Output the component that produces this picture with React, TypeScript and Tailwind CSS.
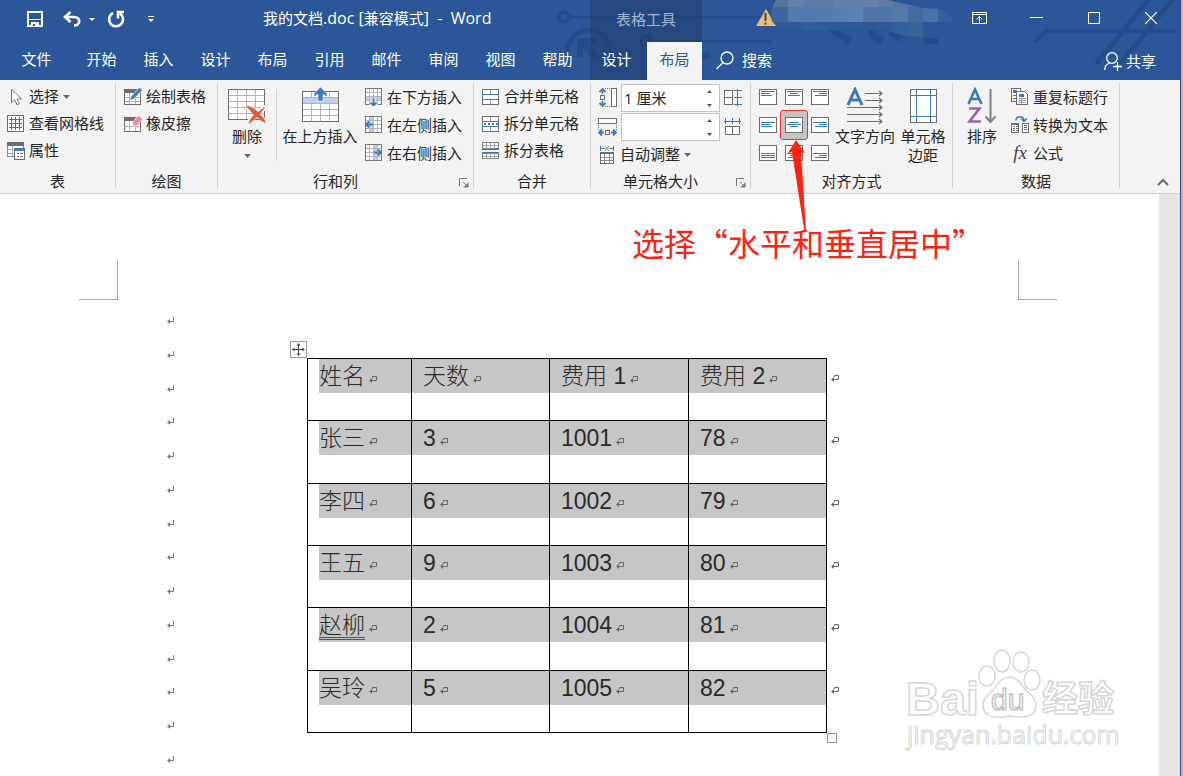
import React from 'react';

type Align = 'start' | 'center' | 'end';

const TABS = ['开始', '插入', '设计', '布局', '引用', '邮件', '审阅', '视图', '帮助'];

const HEADERS = ['姓名', '天数', '费用 1', '费用 2'];

const ROWS = [
  ['张三', '3', '1001', '78'],
  ['李四', '6', '1002', '79'],
  ['王五', '9', '1003', '80'],
  ['赵柳', '2', '1004', '81'],
  ['吴玲', '5', '1005', '82'],
];

const GREY = '#6d6d6d';
const BLUE = '#3f7ab8';

/* ---------- small glyphs ---------- */

const Caret = () => (
  <svg width="7" height="4" viewBox="0 0 7 4" className="shrink-0">
    <path d="M0 0h7L3.5 4z" fill="#6a6a6a" />
  </svg>
);

const CellMark = () => (
  <svg width="8" height="9" viewBox="0 0 8 9" className="shrink-0" fill="none" stroke="#666">
    <path d="M3.5 3V1.5H7.5V5.5H2" />
    <path d="M0 5.5L3 3v5z" fill="#666" stroke="none" />
  </svg>
);

const ParagraphMark = () => (
  <svg width="8" height="9" viewBox="0 0 8 9" fill="none" stroke="#777">
    <path d="M6.5 1v4.5H2" />
    <path d="M0 5.5L3 3v5z" fill="#777" stroke="none" />
  </svg>
);

const Launcher = () => (
  <svg width="10" height="10" viewBox="0 0 10 10" fill="none" stroke="#777">
    <path d="M.5 8V.5H8" shapeRendering="crispEdges" />
    <path d="M4 4l4 4M9 4.5V9H4.5" />
    <path d="M9 5v4H5z" fill="#777" stroke="none" />
  </svg>
);

/* ---------- ribbon icons ---------- */

const Icon = ({ children }: { children: React.ReactNode }) => (
  <svg width="18" height="18" viewBox="0 0 18 18" fill="none" className="shrink-0">
    {children}
  </svg>
);

const CursorIcon = () => (
  <Icon>
    <path d="M4.5 1v14l3.3-3.2 2.2 5 2.3-1-2.2-4.8h4.4z" fill="#fff" stroke="#777" />
  </Icon>
);

const GridlinesIcon = () => (
  <Icon>
    <g shapeRendering="crispEdges">
      <path d="M.5 .5h16v16H.5z" fill="#fff" stroke={GREY} />
      <path d="M4.5 2v13M8.5 2v13M12.5 2v13M2 4.5h13M2 8.5h13M2 12.5h13" stroke="#2f78c4" />
    </g>
  </Icon>
);

const PropertiesIcon = () => (
  <Icon>
    <g shapeRendering="crispEdges">
      <path d="M.5 .5h16v14H.5z" fill="#fff" stroke="#8a8a8a" />
      <path d="M0 0h17v4H0z" fill={GREY} />
      <path d="M1 7.5h6M1 11.5h6M5.5 4v10" stroke="#aaa" />
      <path d="M7.5 6.5h10v11h-10z" fill="#fff" stroke={GREY} />
      <path d="M7 6h11v3H7z" fill={BLUE} />
      <path d="M10 11.5h2M13 11.5h3M10 14.5h2M13 14.5h3" stroke={GREY} />
    </g>
  </Icon>
);

const DrawTableIcon = () => (
  <Icon>
    <g shapeRendering="crispEdges">
      <path d="M.5 1.5h16v15H.5z" fill="#fff" stroke={GREY} />
      <path d="M0 1h13v4H0z" fill={GREY} />
      <path d="M1 9.5h15M1 13.5h15M5.5 5v11M11.5 5v11" stroke="#b0b0b0" />
    </g>
    <path d="M6 12.5l1-4L15.5-.5l3 2.5L10 11z" fill={BLUE} stroke="#f3f3f3" strokeWidth=".7" />
  </Icon>
);

const EraserIcon = () => (
  <Icon>
    <g shapeRendering="crispEdges">
      <path d="M.5 2.5h16v14H.5z" fill="#fff" stroke={GREY} />
      <path d="M0 2h11v4H0z" fill={GREY} />
      <path d="M1 11.5h15M5.5 6v10M11.5 9v7" stroke="#b0b0b0" />
    </g>
    <path d="M8 7.5L14.5 .5l4.5 3.5-6.5 7h-2.5z" fill="#e58c9f" stroke="#f3f3f3" strokeWidth=".7" />
  </Icon>
);

type Side = 'below' | 'left' | 'right';

const InsertIcon = ({ side }: { side: Side }) => (
  <Icon>
    <g shapeRendering="crispEdges">
      <path d="M.5 .5h16v16H.5z" fill="#fff" />
      {side === 'below' && <path d="M1 9h15v4H1z" fill="#bdd2e8" />}
      {side === 'left' && <path d="M5 1h4v15H5z" fill="#bdd2e8" />}
      {side === 'right' && <path d="M9 1h4v15H9z" fill="#bdd2e8" />}
      <path d="M1 4.5h15M1 8.5h15M1 12.5h15M4.5 1v15M8.5 1v15M12.5 1v15" stroke="#b4b4b4" />
      <path d="M.5 .5h16v16H.5z" stroke="#777" />
    </g>
    {side === 'below' && <path d="M8.5 11v7M5.5 14.5l3 3 3-3" stroke="#f3f3f3" strokeWidth="4" />}
    {side === 'below' && <path d="M8.5 11v6M5.5 14.5l3 3 3-3" stroke={BLUE} strokeWidth="1.8" />}
    {side === 'left' && <path d="M8 8.5H1M4 5.5l-3 3 3 3" stroke={BLUE} strokeWidth="1.8" />}
    {side === 'right' && <path d="M9 8.5h7M13 5.5l3 3-3 3" stroke={BLUE} strokeWidth="1.8" />}
  </Icon>
);

const MergeIcon = () => (
  <Icon>
    <g shapeRendering="crispEdges">
      <path d="M.5 1.5h16v15H.5z" fill="#fff" stroke={GREY} />
      <path d="M8.5 2v4M8.5 12v4" stroke="#a0a0a0" />
      <path d="M0 6.5h17M0 11.5h17" stroke={BLUE} />
    </g>
  </Icon>
);

const SplitCellsIcon = () => (
  <Icon>
    <g shapeRendering="crispEdges">
      <path d="M.5 1.5h16v15H.5z" fill="#fff" stroke={GREY} />
      <path d="M8.5 2v4M8.5 12v4" stroke="#a0a0a0" />
      <path d="M0 6.5h17M0 11.5h17" stroke={BLUE} />
      <path d="M2 9h2M6 9h2M10 9h2M14 9h2" stroke={BLUE} strokeWidth="2" />
    </g>
  </Icon>
);

const SplitTableIcon = () => (
  <Icon>
    <g shapeRendering="crispEdges">
      <path d="M.5 .5h16v6H.5zM.5 11.5h16v5H.5z" fill="#fff" stroke="#808080" />
      <path d="M4.5 1v5M8.5 1v5M12.5 1v5M4.5 12v4M8.5 12v4M12.5 12v4M1 3.5h15M1 14.5h15" stroke="#a4a4a4" />
      <path d="M0 7.5h17M0 10.5h17" stroke={BLUE} />
      <path d="M0 8h17v2H0z" fill="#fff" />
    </g>
  </Icon>
);

const RepeatHeaderIcon = () => (
  <Icon>
    <g shapeRendering="crispEdges">
      <path d="M.5 .5h9v13H.5z" fill="#fff" stroke={GREY} />
      <path d="M2 2h4v3H2z" fill={BLUE} />
      <path d="M2 7.5h3M2 10.5h3" stroke={GREY} />
      <path d="M5.5 3.5h8l3 3v10h-11z" fill="#fff" stroke={GREY} />
      <path d="M8 6h5v3H8z" fill={BLUE} />
      <path d="M8 10.5h7M8 12.5h7M8 14.5h7M10.5 10v6" stroke="#999" />
    </g>
  </Icon>
);

const ConvertIcon = () => (
  <Icon>
    <path d="M5 4.5C5-.5 13-.5 13 4.5" stroke={BLUE} strokeWidth="1.5" />
    <path d="M10 2.5l3 3 3-3" stroke={BLUE} strokeWidth="1.5" />
    <g shapeRendering="crispEdges">
      <path d="M.5 7.5h7v9h-7zM11.5 7.5h6v9h-6z" fill="#fff" stroke={GREY} />
      <path d="M0 7h8v2H0z" fill={GREY} />
      <path d="M2 10.5h2M5 10.5h2M2 12.5h2M5 12.5h2M2 14.5h2M5 14.5h2" stroke={GREY} />
      <path d="M13 9.5h3M13 11.5h3M13 13.5h3" stroke={BLUE} />
    </g>
  </Icon>
);

const FormulaIcon = () => (
  <span className="w-[18px] shrink-0 text-center font-['Liberation_Serif',serif] text-[19px] leading-5 text-[#444] italic">fx</span>
);

const RowHeightIcon = () => (
  <svg width="20" height="20" viewBox="0 0 20 20" fill="none" className="shrink-0">
    <g shapeRendering="crispEdges">
      <path d="M13.5 .5h5v18h-5z" fill="#fff" stroke={GREY} />
      <path d="M7 .5h6M7 18.5h6" stroke={GREY} strokeDasharray="1 1" />
      <path d="M2.5 7.5h4v4h-4z" stroke={GREY} />
    </g>
    <path d="M4.5 6V1.5M4.5 13v4.5M1.5 4l3-3 3 3M1.5 15l3 3 3-3" stroke={BLUE} strokeWidth="1.8" />
  </svg>
);

const ColumnWidthIcon = () => (
  <svg width="20" height="20" viewBox="0 0 20 20" fill="none" className="shrink-0">
    <g shapeRendering="crispEdges">
      <path d="M.5 1.5h18v5H.5z" fill="#fff" stroke={GREY} />
      <path d="M.5 8v5M18.5 8v5" stroke={GREY} strokeDasharray="1 1" />
      <path d="M7.5 13.5h4v4h-4z" stroke={GREY} />
    </g>
    <path d="M6 15.5H1M13 15.5h5M4 12.5l-3 3 3 3M15 12.5l3 3-3 3" stroke={BLUE} strokeWidth="1.8" />
  </svg>
);

const DistributeRowsIcon = () => (
  <Icon>
    <g shapeRendering="crispEdges">
      <path d="M.5 1.5h8v14h-8zM0 8.5h9" stroke={GREY} fill="#fff" />
      <path d="M10 1.5h8M10 8.5h8M10 15.5h8M13.5 0v17" stroke={BLUE} />
    </g>
  </Icon>
);

const DistributeColumnsIcon = () => (
  <Icon>
    <g shapeRendering="crispEdges">
      <path d="M1.5 8.5h14v8h-14zM8.5 8v8" stroke={GREY} fill="#fff" />
      <path d="M0 3.5h17M1.5 0v6M8.5 0v6M15.5 0v6" stroke={BLUE} />
    </g>
  </Icon>
);

const AutoFitIcon = () => (
  <Icon>
    <g shapeRendering="crispEdges">
      <path d="M2.5 0v5M15.5 0v5M3 2.5h4M11 2.5h4" stroke={BLUE} />
      <path d="M2.5 6.5h13v11h-13z" fill="#fff" stroke={GREY} />
      <path d="M2 7.5h14" stroke={GREY} />
      <path d="M6.5 8v9M11.5 8v9M3 11.5h12M3 14.5h12" stroke="#8a8a8a" />
    </g>
    <path d="M7 0l4 5M11 0L7 5" stroke="#888" />
  </Icon>
);

const LINE_TOP: Record<Align, number> = { start: 2.5, center: 5.5, end: 8.5 };

const AlignIcon = ({ v, h }: { v: Align; h: Align }) => {
  let widths = [14, 8, 12];
  if (h === 'start') widths = v === 'end' ? [14, 14, 14] : [14, 9, 11];
  if (v === 'center' && h === 'center') widths = [10, 14, 8];
  return (
    <svg width="18" height="16" viewBox="0 0 18 16" fill="none" shapeRendering="crispEdges">
      <path d="M.5 .5h17v15H.5z" fill="#fff" stroke={GREY} />
      {widths.map((w, i) => {
        const x = h === 'start' ? 2 : h === 'center' ? 9 - w / 2 : 16 - w;
        return <path key={i} d={`M${x} ${LINE_TOP[v] + i * 2}h${w}`} stroke="#2f78c4" />;
      })}
    </svg>
  );
};

const DeleteTableIcon = () => (
  <svg width="40" height="38" viewBox="0 0 40 38" fill="none">
    <g shapeRendering="crispEdges">
      <path d="M1.5 2.5h36v30h-36z" fill="#fff" stroke={GREY} />
      <path d="M10.5 3v29M19.5 3v29M28.5 3v29M2 8.5h35M2 14.5h35M2 20.5h35M2 26.5h35" stroke="#b4b4b4" />
    </g>
    <path d="M20 20c8 3 13 9 19 16M39 20c-8 5-13 10-18 17" stroke="#f3f3f3" strokeWidth="5" />
    <path d="M19 19c5 0 9 3 12 6l8-6c-2 3-4 5-6 8 3 3 5 6 6 9-4-1-7-4-9-6l-8 7c0-4 3-7 5-9-3-3-5-6-8-9z" fill="#d9603b" />
  </svg>
);

const InsertAboveIcon = () => (
  <svg width="38" height="38" viewBox="0 0 38 38" fill="none">
    <g shapeRendering="crispEdges">
      <path d="M1.5 4.5h36v30h-36z" fill="#fff" />
      <path d="M2 11h35v6H2z" fill="#bdd2e8" />
      <path d="M10.5 17v17M19.5 17v17M28.5 17v17M2 10.5h35M2 16.5h35M2 22.5h35M2 28.5h35M10.5 5v6M28.5 5v6" stroke="#b4b4b4" />
      <path d="M1.5 4.5h36v30h-36z" stroke={GREY} />
    </g>
    <path d="M19.5 0l6.5 6.5V10l-4-3v7h-5V7l-4 3V6.5z" fill={BLUE} stroke="#f3f3f3" strokeWidth=".6" />
  </svg>
);

const TextDirectionIcon = () => (
  <svg width="38" height="38" viewBox="0 0 38 38" fill="none">
    <path d="M2 18L9 2.5l7 15.5M4.5 13h9" stroke={BLUE} strokeWidth="3" />
    <g stroke={GREY} strokeWidth="1.2">
      <path d="M19 6.5h16M19 13.5h16M1 20.5h34M1 27.5h34M1 34.5h34" />
      <path d="M33 4l3 2.5-3 2.5M33 11l3 2.5-3 2.5M33 18l3 2.5-3 2.5M33 25l3 2.5-3 2.5M33 32l3 2.5-3 2.5" />
    </g>
  </svg>
);

const CellMarginIcon = () => (
  <svg width="28" height="38" viewBox="0 0 28 38" fill="none" shapeRendering="crispEdges">
    <path d="M1.5 2.5h26v33h-26z" fill="#fff" stroke={GREY} />
    <path d="M7.5 3v32M21.5 3v32M2 8.5h25M2 29.5h25" stroke={BLUE} />
  </svg>
);

const SortIcon = () => (
  <svg width="30" height="38" viewBox="0 0 30 38" fill="none">
    <path d="M1.5 17L8 2.5 14.5 17M4 12h8" stroke={BLUE} strokeWidth="2.6" />
    <path d="M2 21.5h10.5l-10 13H14" stroke="#9a62b8" strokeWidth="2.6" />
    <path d="M23.5 2v33M18.5 29.5l5 5.5 5-5.5" stroke="#808080" strokeWidth="2" />
  </svg>
);

/* ---------- ribbon building blocks ---------- */

interface GroupProps {
  label: string;
  width: string;
  launcher?: boolean;
  children: React.ReactNode;
}

const Group: React.FC<GroupProps> = ({ label, width, launcher, children }) => (
  <section aria-label={label} className={`flex h-[105px] shrink-0 flex-col border-r border-[#d0d0d0] ${width}`}>
    <div className="flex h-[91px]">{children}</div>
    <div className="flex items-center leading-[14px]">
      <span className="flex-1 text-center">{label}</span>
      {launcher && (
        <button type="button" aria-label={`${label}设置`} className="flex w-5 justify-end pt-1 pr-1">
          <Launcher />
        </button>
      )}
    </div>
  </section>
);

interface SmallButtonProps {
  icon: React.ReactNode;
  label: string;
  tall?: boolean;
  menu?: boolean;
}

const SmallButton: React.FC<SmallButtonProps> = ({ icon, label, tall, menu }) => (
  <button type="button" className={`flex items-center gap-1 whitespace-nowrap ${tall ? 'h-7' : 'h-[27px]'}`}>
    {icon}
    <span>{label}</span>
    {menu && <Caret />}
  </button>
);

interface BigButtonProps {
  icon: React.ReactNode;
  lines: string[];
  width: string;
  menu?: boolean;
}

const BigButton: React.FC<BigButtonProps> = ({ icon, lines, width, menu }) => (
  <button type="button" className={`flex shrink-0 flex-col items-center pt-1 whitespace-nowrap ${width}`}>
    {icon}
    <span className="mt-0.5 leading-[19px]">
      {lines.map((line) => (
        <span key={line} className="block">{line}</span>
      ))}
    </span>
    {menu && <span className="mt-2"><Caret /></span>}
  </button>
);

const SizeField = ({ label, value }: { label: string; value: string }) => (
  <div className="flex h-7 w-[99px] items-center border border-[#c3c3c3] bg-white pr-1">
    <input type="text" aria-label={label} defaultValue={value} className="w-full min-w-0 pl-0.5 outline-none" />
    <div className="flex flex-col gap-1">
      <button type="button" aria-label={`增大${label}`} className="flex h-[10px] w-3 items-center justify-center">
        <svg width="5" height="3" viewBox="0 0 5 3"><path d="M0 3h5L2.5 0z" fill="#555" /></svg>
      </button>
      <button type="button" aria-label={`减小${label}`} className="flex h-[10px] w-3 items-center justify-center">
        <svg width="5" height="3" viewBox="0 0 5 3"><path d="M0 0h5L2.5 3z" fill="#555" /></svg>
      </button>
    </div>
  </div>
);

/* ---------- header ---------- */

const MOSAIC = [
  ['#43669f', '#56749f', '#6481ad', '#5d7cac', '#5e7aa6', '#6480a9', '#6580a8', '#6680a8', '#607ba5', '#57749f', '#52709f', '#4d6e9f'],
  ['#3f659f', '#3f659f', '#5579b0', '#5478b0', '#5679b1', '#597cb3', '#5e80b7', '#5374a5', '#5175ab', '#5477ae', '#426aa3', '#4c71aa'],
  ['#325b9b', '#315a99', '#2d5b9e', '#315e9f', '#2f5b9a', '#2f5998', '#2f5998', '#2e5794', '#305b99', '#335f9d', '#3b6398', '#2b5596'],
];

const HeaderArt = () => (
  <svg width="1180" height="80" viewBox="0 0 1180 80" fill="none" className="absolute top-0 left-0">
    <g stroke="#254c88" strokeWidth="3">
      <circle cx="564" cy="17" r="5" />
      <path d="M570 17h190" />
      <circle cx="646" cy="41" r="5" />
      <path d="M652 41h120" />
    </g>
    <g stroke="#254c88">
      <path d="M570 63a22 22 0 1 1 38 0" strokeWidth="5" />
      <path d="M580 57V41h17M581 42l16 16" strokeWidth="6" />
      <path d="M702 57l8-3M830 28l20 14M870 28c2 8 6 12 12 14M890 32l8 6 8-7M924 41h14" strokeWidth="6" />
      <path d="M1035 42l11-11h129" strokeWidth="4" />
      <path d="M1150-2l-54 66M1174-2l-54 66" strokeWidth="5" />
    </g>
    <clipPath id="blob">
      <path d="M776 0h112l35 8 15 1q12 2 15 13h-15v16l-33-2-20-6H790q-20-4-19-14t5-16z" />
    </clipPath>
    <path d="M756 26l10-17 10 17z" fill="#e9bf78" />
    <path d="M765.5 13v8M765.5 22.5v2" stroke="#444" strokeWidth="2" />
    <g clipPath="url(#blob)" shapeRendering="crispEdges">
      {MOSAIC.map((row, r) =>
        row.map((fill, c) => (
          <rect key={`${r}-${c}`} x={758 + c * 15} y={r === 0 ? 0 : r === 1 ? 7 : 22} width="15" height={r === 0 ? 7 : 15} fill={fill} />
        ))
      )}
      <rect x="938" y="7" width="15" height="15" fill="#355f9f" />
    </g>
  </svg>
);

const WindowHeader = () => (
  <header className="relative bg-[#2b579a] text-white">
    <HeaderArt />
    <div className="relative flex h-[42px]">
      <div className="flex w-[590px] shrink-0 items-center pb-1">
        <button type="button" aria-label="保存" className="ml-[27px]">
          <svg width="16" height="16" viewBox="0 0 16 16" fill="none" shapeRendering="crispEdges">
            <path d="M1 1h14v14H1z" stroke="#fff" strokeWidth="2" />
            <path d="M1 8h14v1H1zM4 11h8v4H4z" fill="#fff" />
            <path d="M6 13h2v2H6z" fill="#2b579a" />
          </svg>
        </button>
        <button type="button" aria-label="撤消" className="ml-5 flex items-center gap-2">
          <svg width="18" height="16" viewBox="0 0 18 16" fill="none" stroke="#fff" strokeWidth="2.6">
            <path d="M7.5 1L2 6l5.5 5M2.5 6H11c7 0 7 8.5 0 8.5" />
          </svg>
          <svg width="6" height="3" viewBox="0 0 6 3"><path d="M0 0h6L3 3z" fill="#fff" /></svg>
        </button>
        <button type="button" aria-label="重复" className="ml-3">
          <svg width="18" height="18" viewBox="0 0 18 18" fill="none" stroke="#fff" strokeWidth="2.6">
            <path d="M6 3a7 7 0 1 0 7 .5M11 8.5V2h6" />
          </svg>
        </button>
        <button type="button" aria-label="自定义快速访问工具栏" className="ml-[23px]">
          <svg width="6" height="7" viewBox="0 0 6 7"><path d="M0 0h6v1H0zM0 3h6L3 6z" fill="#fff" /></svg>
        </button>
        <h1 className="ml-[109px] pb-0.5 whitespace-pre">
          我的文档<span className="text-base">.doc [</span>兼容模式<span className="text-base">]  -  Word</span>
        </h1>
      </div>
      <div className="flex w-28 shrink-0 items-center justify-center bg-[#1f3d6e]/60 pb-1 text-[#a3b7d4]">表格工具</div>
      <div className="flex flex-1 items-center justify-end gap-[43px] pr-[23px] pb-1.5">
        <button type="button" aria-label="功能区显示选项">
          <svg width="15" height="12" viewBox="0 0 15 12" fill="none" stroke="#fff">
            <path d="M.5 .5h14v11H.5zM0 2.5h15" shapeRendering="crispEdges" />
            <path d="M7.5 11V4.5M4.5 7.5l3-3 3 3" />
          </svg>
        </button>
        <button type="button" aria-label="最小化">
          <svg width="13" height="12" viewBox="0 0 13 12"><path d="M0 5h13v1H0z" fill="#fff" /></svg>
        </button>
        <button type="button" aria-label="最大化" className="ml-0.5">
          <svg width="12" height="12" viewBox="0 0 12 12" fill="none" stroke="#fff" shapeRendering="crispEdges"><path d="M.5 .5h11v11H.5z" /></svg>
        </button>
        <button type="button" aria-label="关闭" className="ml-0.5">
          <svg width="12" height="12" viewBox="0 0 12 12" stroke="#fff" strokeWidth="1.2"><path d="M0 0l12 12M12 0L0 12" /></svg>
        </button>
      </div>
    </div>
    <nav className="relative flex h-[38px] items-center">
      <button type="button" className="h-full w-[73px] pb-1">文件</button>
      {TABS.map((tab) => (
        <button key={tab} type="button" className="h-full w-[57px] pb-1">{tab}</button>
      ))}
      <div className="ml-1 flex h-full w-28 bg-[#1f3d6e]/60">
        <button type="button" className="w-[57px] pr-1 pb-1">设计</button>
        <button type="button" aria-current="page" className="w-[55px] bg-[#f3f3f3] pb-1 text-[#2b579a]">布局</button>
      </div>
      <button type="button" className="ml-[14px] flex items-center gap-2 pb-0.5">
        <svg width="18" height="19" viewBox="0 0 18 19" fill="none" stroke="#fff" strokeWidth="1.3">
          <circle cx="11" cy="7" r="6" />
          <path d="M7 11.5L.5 18" />
        </svg>
        <span>搜索</span>
      </button>
      <button type="button" className="mr-6 ml-auto flex items-center gap-1">
        <svg width="18" height="19" viewBox="0 0 18 19" fill="none" stroke="#fff" strokeWidth="1.3">
          <circle cx="8" cy="6" r="5.3" />
          <path d="M.7 18c0-4 2-6 5-7M13.5 10v9M9 14.5h9" />
        </svg>
        <span>共享</span>
      </button>
    </nav>
  </header>
);

/* ---------- ribbon ---------- */

const ALIGNS: Align[] = ['start', 'center', 'end'];

const Ribbon = () => (
  <div className="flex h-[114px] border-b border-[#d0d0d0] bg-[#f3f3f3] pt-[3px] text-[#262626]">
    <Group label="表" width="w-[116px]">
      <div className="pl-[7px]">
        <SmallButton icon={<CursorIcon />} label="选择" menu />
        <SmallButton icon={<GridlinesIcon />} label="查看网格线" />
        <SmallButton icon={<PropertiesIcon />} label="属性" />
      </div>
    </Group>
    <Group label="绘图" width="w-[102px]">
      <div className="pl-2">
        <SmallButton icon={<DrawTableIcon />} label="绘制表格" />
        <SmallButton icon={<EraserIcon />} label="橡皮擦" />
      </div>
    </Group>
    <Group label="行和列" width="w-[256px]" launcher>
      <BigButton icon={<DeleteTableIcon />} lines={['删除']} width="ml-2 w-[42px]" menu />
      <div className="mt-[7px] ml-2 h-[71px] w-px shrink-0 bg-[#d0d0d0]" />
      <BigButton icon={<InsertAboveIcon />} lines={['在上方插入']} width="ml-[5px] w-[76px]" />
      <div className="pl-[7px]">
        <SmallButton icon={<InsertIcon side="below" />} label="在下方插入" tall />
        <SmallButton icon={<InsertIcon side="left" />} label="在左侧插入" tall />
        <SmallButton icon={<InsertIcon side="right" />} label="在右侧插入" tall />
      </div>
    </Group>
    <Group label="合并" width="w-[117px]">
      <div className="pl-2">
        <SmallButton icon={<MergeIcon />} label="合并单元格" />
        <SmallButton icon={<SplitCellsIcon />} label="拆分单元格" />
        <SmallButton icon={<SplitTableIcon />} label="拆分表格" />
      </div>
    </Group>
    <Group label="单元格大小" width="w-[160px]" launcher>
      <div className="pt-px pl-[7px]">
        <div className="flex h-7 items-center">
          <RowHeightIcon />
          <div className="mr-1 ml-[3px]"><SizeField label="高度" value="1 厘米" /></div>
          <button type="button" aria-label="分布行"><DistributeRowsIcon /></button>
        </div>
        <div className="mt-px flex h-7 items-center">
          <ColumnWidthIcon />
          <div className="mr-1 ml-[3px]"><SizeField label="宽度" value="" /></div>
          <button type="button" aria-label="分布列"><DistributeColumnsIcon /></button>
        </div>
        <SmallButton icon={<AutoFitIcon />} label="自动调整" menu />
      </div>
    </Group>
    <Group label="对齐方式" width="w-[202px]">
      <div className="ml-1 grid h-[84px] shrink-0 grid-cols-[26px_26px_26px] grid-rows-3">
        {ALIGNS.map((v) =>
          ALIGNS.map((h) => {
            const active = v === 'center' && h === 'center';
            return (
              <button
                key={`${v}-${h}`}
                type="button"
                aria-label={`${v} ${h}`}
                aria-pressed={active}
                className={`flex items-center justify-center ${active ? 'rounded-xs bg-[#c5c5c5] outline outline-[#f03028]' : ''}`}
              >
                <AlignIcon v={v} h={h} />
              </button>
            );
          })
        )}
      </div>
      <BigButton icon={<TextDirectionIcon />} lines={['文字方向']} width="w-16" />
      <BigButton icon={<CellMarginIcon />} lines={['单元格', '边距']} width="w-[52px]" />
    </Group>
    <Group label="数据" width="w-[167px]">
      <BigButton icon={<SortIcon />} lines={['排序']} width="ml-1 w-[50px]" />
      <div className="pl-1">
        <SmallButton icon={<RepeatHeaderIcon />} label="重复标题行" tall />
        <SmallButton icon={<ConvertIcon />} label="转换为文本" tall />
        <SmallButton icon={<FormulaIcon />} label="公式" tall />
      </div>
    </Group>
    <div className="flex flex-1 items-end justify-end pr-[11px] pb-[7px]">
      <button type="button" aria-label="折叠功能区">
        <svg width="12" height="8" viewBox="0 0 12 8" fill="none" stroke="#6a6a6a" strokeWidth="2"><path d="M1 7l5-5 5 5" /></svg>
      </button>
    </div>
  </div>
);

/* ---------- document ---------- */

const DocTable = () => (
  <div className="relative mt-[58px] self-start font-['Liberation_Sans','Noto_Sans_CJK_SC',sans-serif] text-[23px] font-light text-[#2a2a2a]">
    <svg width="17" height="17" viewBox="0 0 17 17" fill="none" className="absolute -top-[17px] -left-[17px]">
      <path d="M.5 .5h16v16H.5z" fill="#fff" stroke="#999" />
      <path d="M8.5 3v11M3 8.5h11" stroke="#444" />
      <path d="M8.5 2l2 2.5h-4zM8.5 15l2-2.5h-4zM2 8.5l2.5-2v4zM15 8.5l-2.5-2v4z" fill="#444" />
    </svg>
    <table className="h-[375px] w-[547px] table-fixed border-collapse">
      <colgroup>
        <col className="w-[104px]" />
        <col className="w-[138px]" />
        <col className="w-[139px]" />
        <col className="w-[138px]" />
        <col className="w-[28px]" />
      </colgroup>
      <tbody>
        {[HEADERS, ...ROWS].map((row, r) => (
          <tr key={row[0]}>
            {row.map((text, c) => {
              const Cell = r === 0 ? 'th' : 'td';
              return (
                <Cell key={c} className="border border-black p-0 text-left align-top font-light">
                  <div className={`flex h-[34px] items-center gap-1 bg-[#c6c6c6] ${c === 0 ? 'ml-[11px]' : 'pl-[11px]'}`}>
                    <span className={text === '赵柳' ? '-mb-[3px] border-b-3 border-double border-[#1f55d0] leading-6' : 'leading-6'}>{text}</span>
                    <span className="pt-1.5"><CellMark /></span>
                  </div>
                </Cell>
              );
            })}
            <td className="p-0 align-top">
              <div className="flex h-[34px] items-center pt-1.5 pl-1"><CellMark /></div>
            </td>
          </tr>
        ))}
      </tbody>
    </table>
    <div className="absolute right-[18px] -bottom-[10px] size-[10px] border border-[#999] bg-white" />
  </div>
);

const Watermark = () => (
  <svg width="216" height="106" viewBox="0 0 216 106" className="absolute right-[37px] bottom-5 overflow-visible" fill="#fff" stroke="#d6d6d6" strokeWidth="1.5">
    <g fontFamily="'Liberation Sans', 'Noto Sans CJK SC', sans-serif" fontWeight="700">
      <text x="0" y="65" fontSize="47">Bai</text>
      <text x="136" y="62" fontSize="36">经验</text>
      <text x="1" y="94" fontSize="25" fontFamily="'Open Sans', sans-serif" fontWeight="400" strokeWidth="1">jingyan.baidu.com</text>
    </g>
    <ellipse cx="81" cy="26" rx="8" ry="10" />
    <ellipse cx="96" cy="11" rx="8" ry="11" />
    <ellipse cx="115" cy="12" rx="8" ry="10" />
    <ellipse cx="126" cy="30" rx="8" ry="10" />
    <path d="M103 27c9 0 12 8 18 14 8 7 11 12 8 19-3 8-13 8-25 6-12 2-23 2-26-6-3-8 1-12 8-19 6-6 8-14 17-14z" />
    <text x="85" y="60" fontSize="30" fontFamily="'Liberation Sans', sans-serif" stroke="#c4c4c4">du</text>
  </svg>
);

const Document = () => (
  <main className="flex flex-1">
    <div className="relative flex-1 bg-white pt-[67px]">
      <div className="flex">
        <div className="ml-[79px] size-[39px] border-r border-b border-[#a6a6a6]" />
        <div className="ml-[900px] size-[39px] border-b border-l border-[#a6a6a6]" />
      </div>
      <div className="flex">
        <div className="mt-4 flex h-[448px] w-[307px] flex-col justify-between pl-[167px]">
          {Array.from({ length: 14 }, (_, i) => (
            <ParagraphMark key={i} />
          ))}
        </div>
        <DocTable />
      </div>
      <Watermark />
      {/* callout laid over the ribbon and the page */}
      <svg width="20" height="94" viewBox="0 0 20 94" className="absolute -top-[54px] left-[788px]">
        <path d="M8 0l9 13-4-1 5 80h-1.5L4 12l-4 1z" fill="#ff2213" />
      </svg>
      <p className="absolute top-7 left-[632px] font-['Noto_Sans_CJK_SC',sans-serif] text-[32px] leading-10 whitespace-nowrap text-[#ff2213]">
        选择“水平和垂直居中”
      </p>
    </div>
    <div className="w-[21px] shrink-0 bg-[#e5e5e5]" />
  </main>
);

export default function App() {
  return (
    <div lang="zh-CN" className="flex min-h-screen overflow-hidden bg-[#b4b4b4] font-['Open_Sans','Noto_Sans_CJK_SC',sans-serif] text-[15px]">
      <div className="flex min-w-0 flex-1 flex-col">
        <WindowHeader />
        <Ribbon />
        <Document />
      </div>
      <div className="w-[3px] shrink-0 border-l border-[#2b579a]" />
    </div>
  );
}
